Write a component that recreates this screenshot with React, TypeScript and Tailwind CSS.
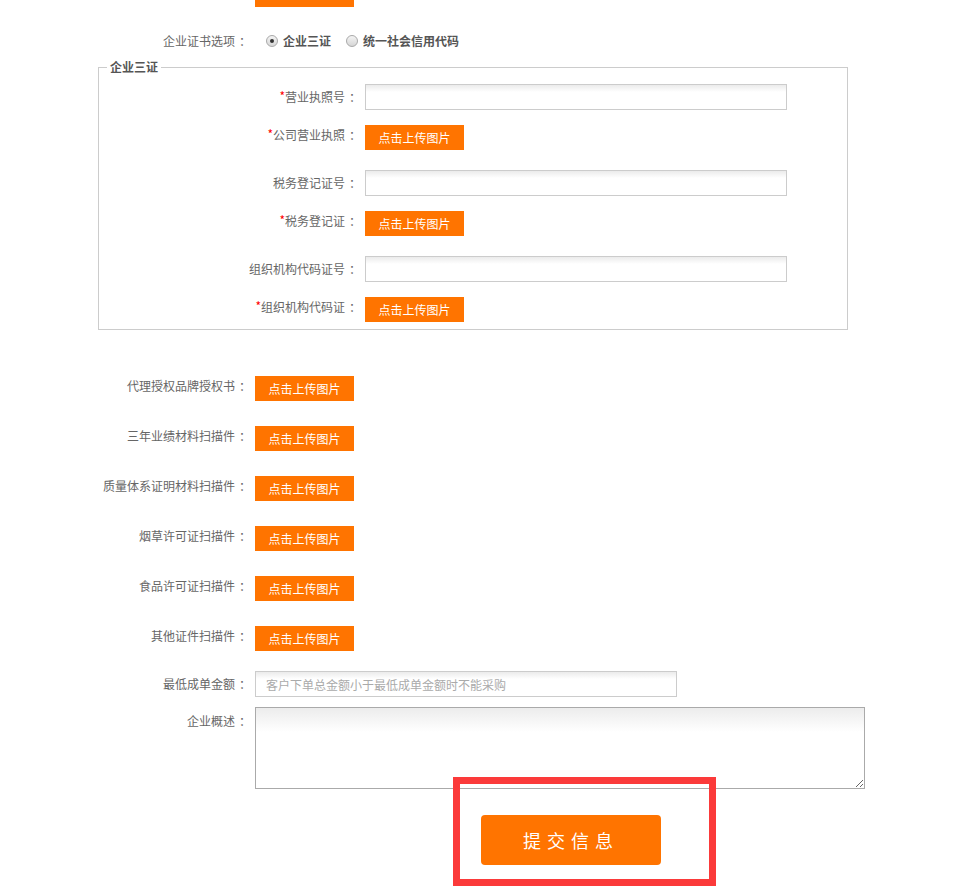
import React from "react"

const orange = "bg-[#ff7400]"

function UploadButton() {
  return (
    <button
      type="button"
      className={`${orange} w-[99px] h-[25px] text-white text-[12px] leading-[25px] text-center`}
    >
      点击上传图片
    </button>
  )
}

function Radio({ checked }: { checked?: boolean }) {
  return (
    <span className="w-[12px] h-[12px] rounded-full border border-[#a9a9a9] bg-[linear-gradient(to_bottom,#f4f4f4,#d6d6d6)] flex items-center justify-center">
      {checked && <span className="w-[4px] h-[4px] rounded-full bg-[#333]" />}
    </span>
  )
}

function Label({ text, required, width }: { text: string; required?: boolean; width: string }) {
  return (
    <div className={`${width} shrink-0 text-right text-[12px] leading-[20px] text-[#666]`}>
      {required && <span className="text-[#f00] relative top-[-1px]">*</span>}
      {text}
      <span className="relative left-[4px] inline-block w-[12px] text-left">：</span>
    </div>
  )
}

const inputCls =
  "w-[422px] h-[26px] border border-[#ccc] bg-[linear-gradient(to_bottom,#ebebeb,#fff_7px)] outline-none px-[10px] text-[12px]"

export default function App() {
  const uploads = [
    "代理授权品牌授权书",
    "三年业绩材料扫描件",
    "质量体系证明材料扫描件",
    "烟草许可证扫描件",
    "食品许可证扫描件",
    "其他证件扫描件",
  ]

  return (
    <div
      className="relative w-[956px] min-h-[896px] bg-white"
      style={{ fontFamily: '"Microsoft YaHei", "Noto Sans CJK SC", "Noto Sans", sans-serif' }}
    >
      <div className={`${orange} ml-[255px] w-[99px] h-[7px]`} />

      <div className="mt-[24px] h-[20px] flex items-center">
        <Label text="企业证书选项" width="w-[247px]" />
        <div className="ml-[19px] flex items-center text-[12px] font-bold text-[#555]">
          <Radio checked />
          <span className="ml-[5px]">企业三证</span>
          <span className="ml-[15px]">
            <Radio />
          </span>
          <span className="ml-[5px]">统一社会信用代码</span>
        </div>
      </div>

      <fieldset className="mt-[7px] ml-[98px] w-[750px] border border-[#ccc] pt-[8px] pb-[8px]">
        <legend className="ml-[8px] px-[3px] text-[12px] leading-[18px] font-bold text-[#555]">企业三证</legend>

        <div className="flex items-center h-[26px]">
          <Label text="营业执照号" required width="w-[258px]" />
          <input className={`ml-[8px] ${inputCls}`} />
        </div>
        <div className="mt-[14px] flex items-center h-[25px]">
          <Label text="公司营业执照" required width="w-[258px] -mt-[4px]" />
          <div className="ml-[8px]"><UploadButton /></div>
        </div>

        <div className="mt-[21px] flex items-center h-[26px]">
          <Label text="税务登记证号" width="w-[258px]" />
          <input className={`ml-[8px] ${inputCls}`} />
        </div>
        <div className="mt-[14px] flex items-center h-[25px]">
          <Label text="税务登记证" required width="w-[258px] -mt-[4px]" />
          <div className="ml-[8px]"><UploadButton /></div>
        </div>

        <div className="mt-[21px] flex items-center h-[26px]">
          <Label text="组织机构代码证号" width="w-[258px]" />
          <input className={`ml-[8px] ${inputCls}`} />
        </div>
        <div className="mt-[14px] flex items-center h-[25px]">
          <Label text="组织机构代码证" required width="w-[258px] -mt-[4px]" />
          <div className="ml-[8px]"><UploadButton /></div>
        </div>
      </fieldset>

      <div className="mt-[45px] flex flex-col gap-[25px]">
        {uploads.map((u) => (
          <div key={u} className="flex items-center h-[25px]">
            <Label text={u} width="w-[247px] -mt-[3px]" />
            <div className="ml-[8px]"><UploadButton /></div>
          </div>
        ))}
      </div>

      <div className="mt-[21px] flex items-center h-[26px]">
        <Label text="最低成单金额" width="w-[247px]" />
        <input
          className={`ml-[8px] ${inputCls} placeholder:text-[#aaa]`}
          placeholder="客户下单总金额小于最低成单金额时不能采购"
        />
      </div>

      <div className="mt-[10px] flex items-start">
        <div className="pt-[4px]">
          <Label text="企业概述" width="w-[247px]" />
        </div>
        <textarea className="ml-[8px] w-[610px] h-[82px] border border-[#aaa] bg-[linear-gradient(to_bottom,#ececec,#fff_24px)] outline-none text-[12px]" />
      </div>

      <button
        type="button"
        className={`${orange} mt-[26px] ml-[481px] block w-[180px] h-[50px] rounded-[4px] text-white text-[18px] tracking-[6px] text-center`}
      >
        提交信息
      </button>

      <div className="absolute left-[453px] top-[777px] w-[263px] h-[109px] border-[7px] border-[#fb3a3a]" />
    </div>
  )
}
